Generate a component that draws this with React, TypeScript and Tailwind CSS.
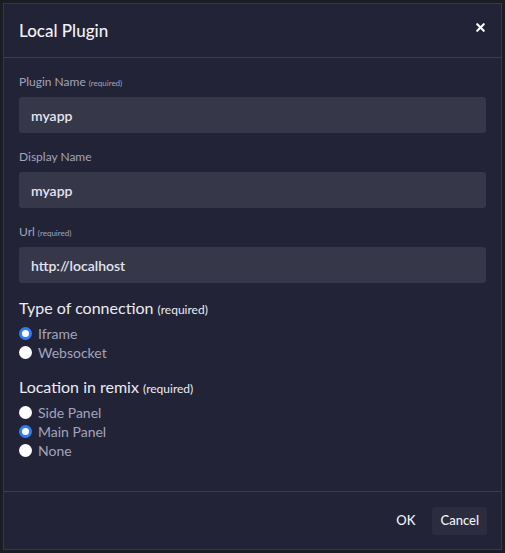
import { X } from 'lucide-react';

type Opt = { label: string; checked?: boolean };

function Radio({ label, checked }: Opt) {
  return (
    <label className="flex h-[19px] items-center gap-[6px]">
      {checked ? (
        <span className="box-border h-[13px] w-[13px] rounded-full border-[3px] border-[#2f7df6] bg-white" />
      ) : (
        <span className="h-[13px] w-[13px] rounded-full bg-white" />
      )}
      <span className="text-[14px] text-[#a2a3bd]">{label}</span>
    </label>
  );
}

function Field({ label, required, value }: { label: string; required?: boolean; value: string }) {
  return (
    <div>
      <div className="mb-[6px] h-[18px] text-[12px] leading-[18px] text-[#a2a3bd]">
        {label}
        {required && <span className="ml-[3px] text-[8px]">(required)</span>}
      </div>
      <div className="flex h-[36px] items-center rounded-[3px] bg-[#363849] px-[12px] text-[14px] font-semibold text-[#e4e4f0]">
        {value}
      </div>
    </div>
  );
}

function Group({ title, options }: { title: string; options: Opt[] }) {
  return (
    <div>
      <div className="mb-[4px] h-[24px] text-[16px] leading-[24px] text-[#ebebf2]">
        {title} <span className="text-[12px]">(required)</span>
      </div>
      {options.map((o) => (
        <Radio key={o.label} {...o} />
      ))}
    </div>
  );
}

export default function App() {
  return (
    <div className="h-[553px] w-[505px] bg-[#1b1c24] pl-[3px] pt-[3px] font-['Lato',sans-serif]">
      <div className="flex h-[547px] w-[499px] flex-col border border-[#353749] bg-[#222336]">
        <div className="flex h-[54px] items-center justify-between border-b border-[#3a3c50] px-[15px]">
          <h2 className="text-[17px] font-medium text-[#f2f2f7]">Local Plugin</h2>
          <X size={13} strokeWidth={4} className="mr-[-1px] mt-[-6px] text-white" />
        </div>

        <div className="flex-1 px-[15px] pt-[15px]">
          <div className="flex flex-col gap-[15px]">
            <Field label="Plugin Name" required value="myapp" />
            <Field label="Display Name" value="myapp" />
            <Field label="Url" required value="http://localhost" />
          </div>
          <div className="mt-[13px] flex flex-col gap-[13px]">
            <Group
              title="Type of connection"
              options={[{ label: 'Iframe', checked: true }, { label: 'Websocket' }]}
            />
            <Group
              title="Location in remix"
              options={[{ label: 'Side Panel' }, { label: 'Main Panel', checked: true }, { label: 'None' }]}
            />
          </div>
        </div>

        <div className="flex h-[58px] items-center justify-end gap-[17px] border-t border-[#3a3c50] px-[14px]">
          <button type="button" className="h-[28px] text-[13px] font-medium text-[#f2f2f7]">
            OK
          </button>
          <button
            type="button"
            className="h-[28px] rounded-[3px] bg-[#2b2d3f] px-[8px] text-[13px] font-medium text-[#f2f2f7]"
          >
            Cancel
          </button>
        </div>
      </div>
    </div>
  );
}
